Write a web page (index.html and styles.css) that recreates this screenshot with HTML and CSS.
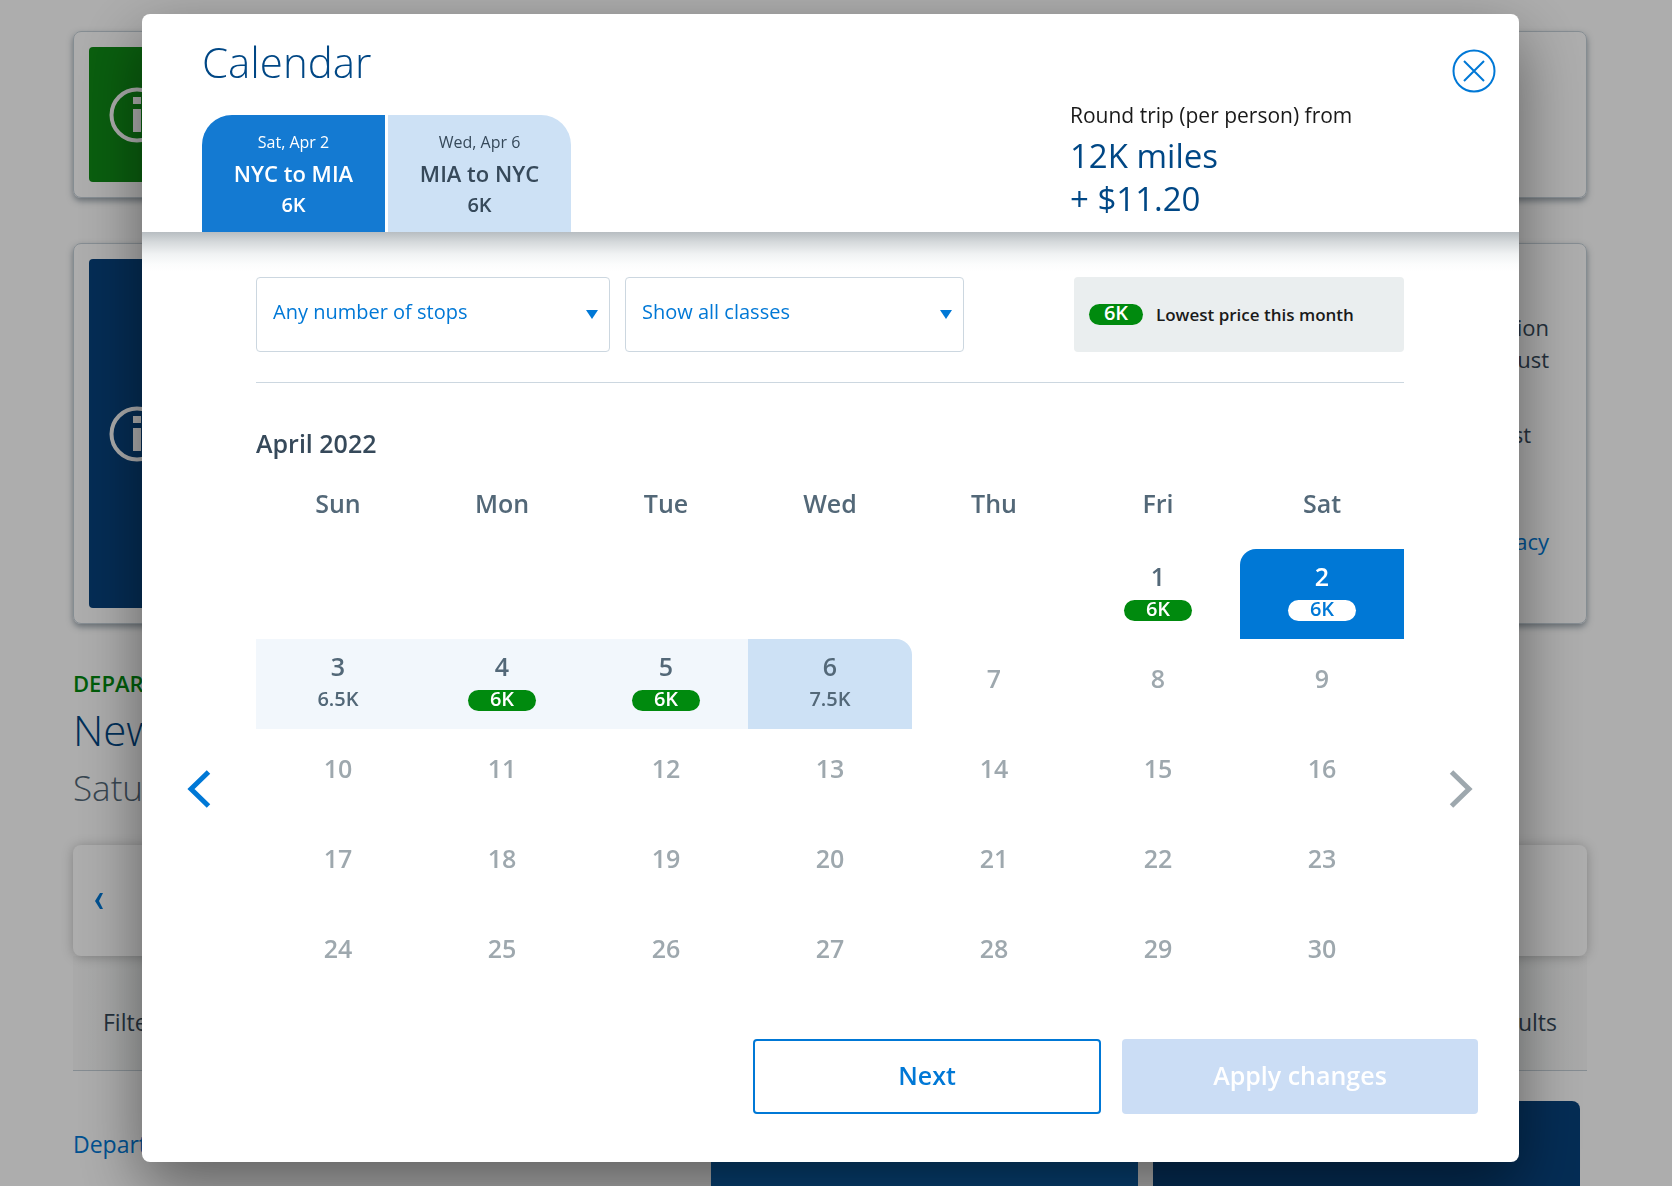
FILE: index.html
```html
<!DOCTYPE html>
<html lang="en">
<head>
    <meta charset="UTF-8">
    <meta name="viewport" content="width=device-width, initial-scale=1.0">
    <title>Calendar</title>
    <link rel="stylesheet" href="styles.css">
</head>
<body>
    <!-- Results page behind the dialog -->
    <main class="page">
        <section class="notice">
            <div class="notice-icon green">
                <svg width="56" height="56" viewBox="0 0 56 56"><circle cx="28" cy="28" r="25.500" fill="none" stroke="#fff" stroke-width="4"/><path d="M24 10h8v7h-8zM24 22h8v23h-8z" fill="#fff"/></svg>
            </div>
        </section>

        <section class="notice notice-tall">
            <div class="notice-icon navy">
                <svg width="56" height="56" viewBox="0 0 56 56"><circle cx="28" cy="28" r="25.500" fill="none" stroke="#fff" stroke-width="4"/><path d="M24 10h8v7h-8zM24 22h8v23h-8z" fill="#fff"/></svg>
            </div>
            <div class="notice-text">
                <p>ion<br>ust</p>
                <p class="short">st</p>
                <a href="#">acy</a>
            </div>
        </section>

        <p class="leg">DEPAR</p>
        <h2 class="city">New</h2>
        <p class="day">Satu</p>

        <div class="date-strip">
            <button class="strip-prev" aria-label="Earlier dates">
                <svg width="8" height="16" viewBox="0 0 8 16"><path d="M5 0h3L4 8l4 8H5L0 8z" fill="currentColor"/></svg>
            </button>
        </div>

        <div class="filter-bar">
            <span>Filte</span>
            <span>ults</span>
        </div>

        <div class="results-head">
            <a href="#">Depart</a>
            <div class="cabin main-cabin"></div>
            <div class="cabin first-cabin"></div>
        </div>
    </main>

    <!-- Calendar dialog -->
    <div class="backdrop">
        <div class="modal" role="dialog" aria-labelledby="modal-title">
            <header class="modal-header">
                <div class="header-left">
                    <h1 id="modal-title">Calendar</h1>
                    <div class="tabs">
                        <button class="tab active">
                            <span class="tab-date">Sat, Apr 2</span>
                            <span class="tab-route">NYC to MIA</span>
                            <span class="tab-price">6K</span>
                        </button>
                        <button class="tab">
                            <span class="tab-date">Wed, Apr 6</span>
                            <span class="tab-route">MIA to NYC</span>
                            <span class="tab-price">6K</span>
                        </button>
                    </div>
                </div>
                <div class="total">
                    <p class="total-label">Round trip (per person) from</p>
                    <p class="total-price">12K miles<br>+ $11.20</p>
                </div>
                <button class="close" aria-label="Close">
                    <svg width="44" height="44" viewBox="0 0 44 44" fill="none" stroke="currentColor" stroke-width="2"><circle cx="22" cy="22" r="20.500"/><path d="M12 12l20 20M32 12L12 32"/></svg>
                </button>
            </header>

            <div class="filters">
                <label class="select-box">
                    <select aria-label="Stops">
                        <option>Any number of stops</option>
                    </select>
                </label>
                <label class="select-box">
                    <select aria-label="Class">
                        <option>Show all classes</option>
                    </select>
                </label>
                <div class="legend">
                    <span class="pill">6K</span>
                    <span>Lowest price this month</span>
                </div>
            </div>

            <div class="calendar">
                <button class="nav prev" aria-label="Previous month">
                    <svg width="24" height="38" viewBox="0 0 24 38" fill="none" stroke="currentColor" stroke-width="5"><path d="M21.500 2L4 19l17.500 17"/></svg>
                </button>
                <div class="month">
                    <h2>April 2022</h2>
                    <table>
                        <thead>
                            <tr><th>Sun</th><th>Mon</th><th>Tue</th><th>Wed</th><th>Thu</th><th>Fri</th><th>Sat</th></tr>
                        </thead>
                        <tbody>
                            <tr>
                                <td></td>
                                <td></td>
                                <td></td>
                                <td></td>
                                <td></td>
                                <td><button class="date">1<span class="pill">6K</span></button></td>
                                <td><button class="date depart">2<span class="pill">6K</span></button></td>
                            </tr>
                            <tr>
                                <td><button class="date range">3<span class="price">6.5K</span></button></td>
                                <td><button class="date range">4<span class="pill">6K</span></button></td>
                                <td><button class="date range">5<span class="pill">6K</span></button></td>
                                <td><button class="date return">6<span class="price">7.5K</span></button></td>
                                <td><button class="date" disabled>7</button></td>
                                <td><button class="date" disabled>8</button></td>
                                <td><button class="date" disabled>9</button></td>
                            </tr>
                            <tr>
                                <td><button class="date" disabled>10</button></td>
                                <td><button class="date" disabled>11</button></td>
                                <td><button class="date" disabled>12</button></td>
                                <td><button class="date" disabled>13</button></td>
                                <td><button class="date" disabled>14</button></td>
                                <td><button class="date" disabled>15</button></td>
                                <td><button class="date" disabled>16</button></td>
                            </tr>
                            <tr>
                                <td><button class="date" disabled>17</button></td>
                                <td><button class="date" disabled>18</button></td>
                                <td><button class="date" disabled>19</button></td>
                                <td><button class="date" disabled>20</button></td>
                                <td><button class="date" disabled>21</button></td>
                                <td><button class="date" disabled>22</button></td>
                                <td><button class="date" disabled>23</button></td>
                            </tr>
                            <tr>
                                <td><button class="date" disabled>24</button></td>
                                <td><button class="date" disabled>25</button></td>
                                <td><button class="date" disabled>26</button></td>
                                <td><button class="date" disabled>27</button></td>
                                <td><button class="date" disabled>28</button></td>
                                <td><button class="date" disabled>29</button></td>
                                <td><button class="date" disabled>30</button></td>
                            </tr>
                        </tbody>
                    </table>
                </div>
                <button class="nav next" aria-label="Next month" disabled>
                    <svg width="24" height="38" viewBox="0 0 24 38" fill="none" stroke="currentColor" stroke-width="5"><path d="M2.500 2L20 19 2.500 36"/></svg>
                </button>
            </div>

            <footer class="modal-footer">
                <button class="btn btn-next">Next</button>
                <button class="btn btn-apply" disabled>Apply changes</button>
            </footer>
        </div>
    </div>
</body>
</html>
```
FILE: styles.css
```css
* {
    box-sizing: border-box;
}

body {
    margin: 0;
    height: 100vh;
    overflow: hidden;
    font-family: "Open Sans", "Noto Sans", sans-serif;
    background-color: #fff;
    color: #36495a;
}

h1, h2, p {
    margin: 0;
}

button, select {
    font-family: inherit;
    border: none;
    background: none;
    padding: 0;
    cursor: pointer;
}

a {
    color: #0078d6;
    text-decoration: none;
}

svg {
    display: block;
}

/* Page behind */
.page {
    padding: 31px 85px 0 73px;
}

.notice {
    display: flex;
    justify-content: space-between;
    height: 167px;
    padding: 15px;
    border: 1px solid #c5d0d8;
    border-radius: 8px;
    box-shadow: 0 3px 6px rgba(54, 73, 90, 0.5);
}

.notice-tall {
    height: 381px;
    margin-top: 45px;
}

.notice-icon {
    display: flex;
    align-items: center;
    justify-content: center;
    width: 96px;
    border-radius: 4px;
}

.green {
    background-color: #0f8c16;
}

.navy {
    background-color: #07427d;
}

.notice-text {
    padding: 52px 22px 0 0;
    font-size: 22px;
    line-height: 32px;
    text-align: right;
}

.notice-text p {
    margin-bottom: 43px;
}

.notice-text .short {
    margin-bottom: 75px;
    padding-right: 18px;
}

.leg {
    margin-top: 43px;
    font-size: 22px;
    font-weight: 600;
    line-height: 32px;
    color: #008a0e;
}

.city {
    margin-top: 3px;
    font-size: 42px;
    font-weight: 300;
    line-height: 56px;
    color: #004785;
}

.day {
    margin-top: 6px;
    font-size: 35px;
    font-weight: 300;
    line-height: 48px;
    color: #536878;
}

.date-strip {
    position: relative;
    display: flex;
    align-items: center;
    height: 111px;
    margin-top: 33px;
    padding-left: 22px;
    border-radius: 8px;
    box-shadow: 0 1px 12px rgba(0, 0, 0, 0.25);
}

.strip-prev {
    color: #0078d6;
}

.filter-bar {
    display: flex;
    align-items: center;
    justify-content: space-between;
    height: 115px;
    padding: 18px 30px 0;
    border-bottom: 1px solid #c5d0d8;
    background: linear-gradient(to right, #fafafa, #eef2f1 120px, #eef2f1 calc(100% - 120px), #fafafa);
    font-size: 23px;
}

.results-head {
    display: grid;
    grid-template-columns: 623fr 427fr 427fr;
    gap: 15px;
    align-items: start;
    padding: 30px 7px 0 0;
    font-size: 23px;
}

.results-head a {
    margin-top: 27px;
}

.cabin {
    height: 120px;
    border-radius: 8px 8px 0 0;
}

.main-cabin {
    background-color: #0a5ea8;
}

.first-cabin {
    background-color: #07427d;
}

/* Dialog */
.backdrop {
    position: fixed;
    inset: 0;
    padding: 14px 153px 0 142px;
    background-color: rgba(0, 0, 0, 0.32);
}

.modal {
    padding-bottom: 48px;
    border-radius: 8px;
    background-color: #fff;
    box-shadow: 0 24px 64px rgba(0, 0, 0, 0.46);
}

.modal-header {
    position: relative;
    display: flex;
    justify-content: space-between;
    padding: 20px 166px 0 60px;
}

/* fade under the header, even across the full width */
.modal-header::after {
    content: "";
    position: absolute;
    top: 100%;
    left: 0;
    right: 0;
    height: 40px;
    background: linear-gradient(#b7bdc1, #d5d9db 25%, #f0f2f3 55%, #fbfcfc 80%, #fff);
}

h1 {
    font-size: 42px;
    font-weight: 300;
    line-height: 56px;
    color: #004785;
}

.tabs {
    display: flex;
    gap: 3px;
    margin-top: 25px;
}

.tab {
    display: flex;
    flex-direction: column;
    align-items: center;
    width: 183px;
    height: 117px;
    padding-top: 12px;
    border-radius: 0 30px 0 0;
    background-color: #cde1f5;
    color: #36495a;
}

.tab.active {
    border-radius: 30px 0 0 0;
    background-color: #147ad2;
    color: #fff;
}

.tab-date {
    font-size: 16px;
    line-height: 30px;
}

.tab-route {
    font-size: 22px;
    font-weight: 600;
    line-height: 32px;
}

.tab-price {
    font-size: 20px;
    font-weight: 600;
    line-height: 32px;
}

.total {
    width: 283px;
    padding-top: 63px;
    white-space: nowrap;
}

.total-label {
    font-size: 21px;
    line-height: 36px;
    color: #1a1a1a;
}

.total-price {
    padding-top: 1px;
    font-size: 33px;
    line-height: 43px;
    color: #004785;
}

.close {
    position: absolute;
    top: 35px;
    right: 23px;
    color: #0078d6;
}

.filters {
    display: grid;
    grid-template-columns: 354fr 339fr 80fr 330fr;
    gap: 15px;
    margin: 45px 115px 0 114px;
    padding-bottom: 30px;
    border-bottom: 1px solid #ccd7e0;
}

.select-box {
    position: relative;
}

.select-box::after {
    content: "";
    position: absolute;
    top: 33px;
    right: 12px;
    border: 6px solid transparent;
    border-top: 9px solid #0078d6;
    border-bottom: none;
    pointer-events: none;
}

select {
    appearance: none;
    display: block;
    width: 100%;
    height: 75px;
    padding: 0 32px 6px 16px;
    border: 1px solid #ccd7e0;
    border-radius: 4px;
    font-size: 20px;
    color: #0078d6;
}

.legend {
    display: flex;
    align-items: center;
    grid-column: 4;
    gap: 13px;
    padding-left: 15px;
    border-radius: 4px;
    background-color: #eaeeef;
    font-size: 17px;
    font-weight: 600;
    color: #1a1a1a;
    white-space: nowrap;
}

.pill {
    width: 68px;
    height: 21px;
    border-radius: 11px;
    background-color: #008a0e;
    color: #fff;
    font-size: 20px;
    font-weight: 600;
    line-height: 18px;
    text-align: center;
}

.legend .pill {
    width: 54px;
}

.calendar {
    display: flex;
    padding: 45px 46px 0 45px;
}

.nav {
    align-self: flex-start;
    margin-top: 342px;
    color: #0078d6;
}

.nav:disabled {
    color: #9ea8ae;
}

.month {
    flex: 1;
    margin: 0 45px;
}

.month h2 {
    font-size: 25px;
    font-weight: 600;
    line-height: 30px;
}

table {
    width: 100%;
    margin-top: 30px;
    border-collapse: collapse;
    table-layout: fixed;
}

th {
    height: 61px;
    padding: 0 0 31px;
    font-size: 25px;
    font-weight: 600;
    line-height: 30px;
    color: #536878;
}

td {
    height: 90px;
    padding: 0;
}

.date {
    display: flex;
    flex-direction: column;
    align-items: center;
    gap: 9px;
    width: 100%;
    height: 90px;
    padding-top: 12px;
    font-size: 25px;
    font-weight: 600;
    line-height: 30px;
    color: #536878;
}

.date:disabled {
    padding-top: 24px;
    color: #9ea8ae;
}

.price {
    font-size: 20px;
    line-height: 18px;
}

.range {
    background-color: #f2f7fc;
}

.depart {
    border-radius: 16px 0 0 0;
    background-color: #0078d6;
    color: #fff;
}

.depart .pill {
    background-color: #fff;
    color: #0078d6;
}

.return {
    border-radius: 0 16px 0 0;
    background-color: #cde1f5;
}

.modal-footer {
    display: flex;
    justify-content: flex-end;
    gap: 21px;
    padding: 40px 41px 0;
}

.btn {
    width: 356px;
    height: 75px;
    padding-bottom: 3px;
    border-radius: 4px;
    font-size: 25px;
    font-weight: 600;
}

.btn-next {
    width: 348px;
    border: 2px solid #0078d6;
    color: #0078d6;
}

.btn-apply {
    background-color: #cbddf5;
    color: #fff;
}
```
